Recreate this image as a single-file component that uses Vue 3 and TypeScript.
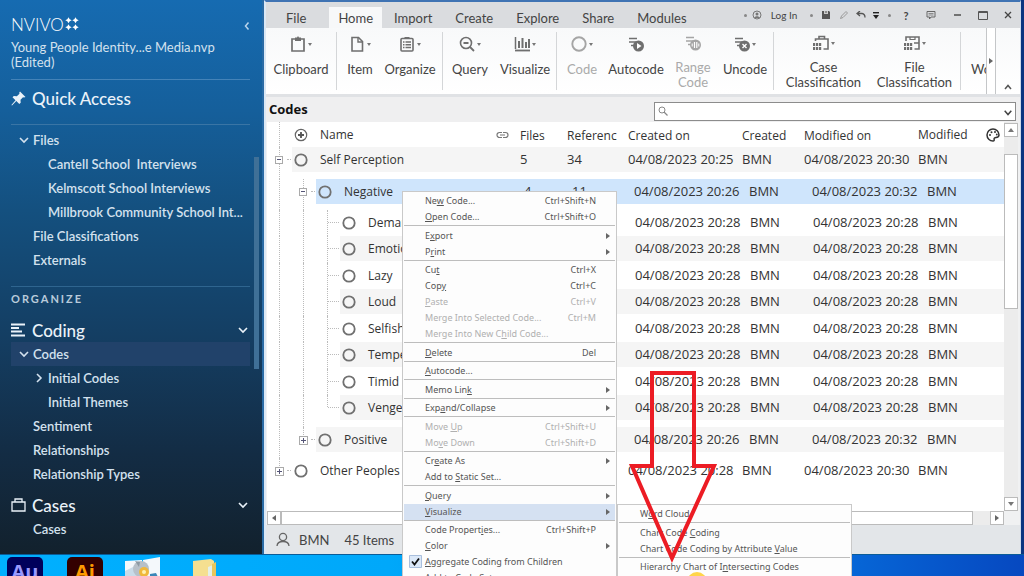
<script setup lang="ts">
import { ref } from 'vue'

interface NavRow { label: string; level: number; arrow?: 'down' | 'right'; active?: boolean }
interface Tool { label: string; icon: string; width: number; caret?: boolean; disabled?: boolean }
interface CodeRow {
  name: string; level: number; box?: '+' | '-'; files?: string; refs?: string
  created: string; modified: string; selected?: boolean; band?: boolean; last?: boolean
}
interface MenuItem { label: string; keys?: string; sub?: boolean; disabled?: boolean; active?: boolean; checked?: boolean }

const fileRows: NavRow[] = [
  { label: 'Files', level: 0, arrow: 'down' },
  { label: 'Cantell School \u00a0Interviews', level: 1 },
  { label: 'Kelmscott School Interviews', level: 1 },
  { label: 'Millbrook Community School Int...', level: 1 },
  { label: 'File Classifications', level: 0 },
  { label: 'Externals', level: 0 },
]
const codingRows: NavRow[] = [
  { label: 'Codes', level: 0, arrow: 'down', active: true },
  { label: 'Initial Codes', level: 1, arrow: 'right' },
  { label: 'Initial Themes', level: 1 },
  { label: 'Sentiment', level: 0 },
  { label: 'Relationships', level: 0 },
  { label: 'Relationship Types', level: 0 },
]
const caseRows: NavRow[] = [{ label: 'Cases', level: 0 }]

const tabs = ['File', 'Home', 'Import', 'Create', 'Explore', 'Share', 'Modules']
const activeTab = ref('Home')

const lines = '<path d="M1 2.5h8M1 6h7M3 9.500h4" stroke="currentColor" stroke-width="1.600" fill="none"/>'
const icons: Record<string, string> = {
  clipboard: '<path d="M2 3h12v12H2z" fill="none" stroke="currentColor" stroke-width="1.7"/><path d="M5 1.500h2L8 0l1 1.500h2V5H5z" fill="currentColor"/>',
  item: '<path d="M3 1.500h6.500L13.500 5.500V15H3z" fill="none" stroke="currentColor" stroke-width="1.600"/><path d="M9 1v5h5" fill="none" stroke="currentColor" stroke-width="1.400"/>',
  organize: '<rect x="2" y="2.500" width="12" height="12.500" rx="1" fill="none" stroke="currentColor" stroke-width="1.600"/><path d="M5.500 1h5v2h-5z" fill="currentColor"/><path d="M4 6h1.500M6.500 6H12M4 8.700h1.500M6.500 8.700H12M4 11.500h1.500M6.500 11.500H12" stroke="currentColor" stroke-width="1.500"/>',
  query: '<circle cx="7" cy="7" r="5.500" fill="none" stroke="currentColor" stroke-width="1.600"/><path d="M11 11l4 4M4.500 7h5" stroke="currentColor" stroke-width="1.800"/>',
  visualize: '<path d="M1.500 1v12" stroke="currentColor" stroke-width="1.500"/><path d="M5 12V5M8.500 12V2M12 12V6M15 12V3" stroke="currentColor" stroke-width="2"/><path d="M1 14.500h15" stroke="currentColor" stroke-width="1.800"/>',
  code: '<circle cx="8" cy="8" r="6.700" fill="none" stroke="currentColor" stroke-width="1.900"/>',
  autocode: lines + '<circle cx="10.500" cy="10" r="5.500" fill="currentColor"/><path d="M9 7l4.500 3L9 13z" fill="#fff"/>',
  range: lines + '<circle cx="10.500" cy="10" r="5.500" fill="currentColor"/><path d="M9.500 7v6M11.800 7v6" stroke="#fff" stroke-width="1.200"/><path d="M7.200 8.500v3M13.800 8.500v3" stroke="#fff"/>',
  uncode: lines + '<circle cx="10.500" cy="10" r="5.500" fill="currentColor"/><path d="M8.500 8l4 4M12.500 8l-4 4" stroke="#fff" stroke-width="1.400"/>',
  caseclass: '<path d="M2.500 6V4H15v10h-4.500" fill="none" stroke="currentColor" stroke-width="1.600"/><path d="M6 4V1.500h5.500V4" fill="none" stroke="currentColor" stroke-width="1.600"/><path d="M0 8h2.200v3H0zM3 8h2.200v3H3zM6 8h2.200v3H6zM0 12h2.200v3H0zM3 12h2.200v3H3zM6 12h2.200v3H6z" fill="currentColor"/>',
  fileclass: '<path d="M2 6V2h13v12h-4.500M10 8h5" fill="none" stroke="currentColor" stroke-width="1.600"/><path d="M6 2v2.500h5V2" fill="none" stroke="currentColor" stroke-width="1.200"/><path d="M0 8h2.200v3H0zM3 8h2.200v3H3zM6 8h2.200v3H6zM0 12h2.200v3H0zM3 12h2.200v3H3zM6 12h2.200v3H6z" fill="currentColor"/>',
}
const groups: { cls: string; tools: Tool[] }[] = [
  { cls: '', tools: [{ label: 'Clipboard', icon: 'clipboard', width: 70, caret: true }] },
  { cls: 'g-item', tools: [
    { label: 'Item', icon: 'item', width: 46, caret: true },
    { label: 'Organize', icon: 'organize', width: 54, caret: true },
  ] },
  { cls: 'g-query', tools: [
    { label: 'Query', icon: 'query', width: 54, caret: true },
    { label: 'Visualize', icon: 'visualize', width: 56, caret: true },
  ] },
  { cls: 'g-code', tools: [
    { label: 'Code', icon: 'code', width: 50, caret: true, disabled: true },
    { label: 'Autocode', icon: 'autocode', width: 58 },
    { label: 'Range Code', icon: 'range', width: 56, disabled: true },
    { label: 'Uncode', icon: 'uncode', width: 48, caret: true },
  ] },
  { cls: 'g-class', tools: [
    { label: 'Case Classification', icon: 'caseclass', width: 91, caret: true },
    { label: 'File Classification', icon: 'fileclass', width: 91, caret: true },
  ] },
]

const d28 = '04/08/2023 20:28'
const kids = ['Demanding', 'Emotional', 'Lazy', 'Loud', 'Selfish', 'Temperamental', 'Timid', 'Vengeful']
const rows: CodeRow[] = [
  { name: 'Self Perception', level: 0, box: '-', files: '5', refs: '34', created: '04/08/2023 20:25', modified: '04/08/2023 20:30', band: true },
  { name: 'Negative', level: 1, box: '-', files: '4', refs: '11', created: '04/08/2023 20:26', modified: '04/08/2023 20:32', selected: true },
  ...kids.map((name, i): CodeRow => ({ name, level: 2, created: d28, modified: d28, band: i % 2 === 1, last: i === kids.length - 1 })),
  { name: 'Positive', level: 1, box: '+', created: '04/08/2023 20:26', modified: '04/08/2023 20:32', band: true, last: true },
  { name: 'Other Peoples', level: 0, box: '+', created: d28, modified: '04/08/2023 20:30', last: true },
]

const menu: MenuItem[][] = [
  [{ label: 'Ne&w Code...', keys: 'Ctrl+Shift+N' }, { label: '&Open Code...', keys: 'Ctrl+Shift+O' }],
  [{ label: 'E&xport', sub: true }, { label: 'P&rint', sub: true }],
  [
    { label: 'Cu&t', keys: 'Ctrl+X' }, { label: 'Cop&y', keys: 'Ctrl+C' },
    { label: '&Paste', keys: 'Ctrl+V', disabled: true },
    { label: 'Merge Into Selected Code...', keys: 'Ctrl+M', disabled: true },
    { label: 'Merge Into New C&hild Code...', disabled: true },
  ],
  [{ label: '&Delete', keys: 'Del' }],
  [{ label: '&Autocode...' }],
  [{ label: 'Memo Lin&k', sub: true }],
  [{ label: 'Exp&and/Collapse', sub: true }],
  [{ label: 'Move &Up', keys: 'Ctrl+Shift+U', disabled: true }, { label: 'Mo&ve Down', keys: 'Ctrl+Shift+D', disabled: true }],
  [{ label: 'Cr&eate As', sub: true }, { label: 'Add to &Static Set...' }],
  [{ label: '&Query', sub: true }, { label: '&Visualize', sub: true, active: true }],
  [
    { label: 'Code Propert&ies...', keys: 'Ctrl+Shift+P' }, { label: '&Color', sub: true },
    { label: '&Aggregate Coding from Children', checked: true }, { label: 'Add to Code &Set...' },
  ],
]
const submenu: MenuItem[][] = [
  [{ label: 'W&ord Cloud' }],
  [{ label: 'Chart Code &Coding' }, { label: 'Chart Code Coding by Attribute &Value' }],
  [{ label: 'Hierarchy Chart of I&ntersecting Codes' }],
]
function parts(label: string): [string, string, string] {
  const i = label.indexOf('&')
  return i < 0 ? [label, '', ''] : [label.slice(0, i), label[i + 1], label.slice(i + 2)]
}
</script>

<template>
  <div class="desktop">
    <div class="window">
      <aside class="side">
        <div class="logo">
          <span>NVIVO</span>
          <svg width="14" height="14" viewBox="0 0 14 14"><path v-for="p in ['M3.500 .3', 'M10.500 .3', 'M3.500 7.300', 'M10.500 7.300']" :key="p" :d="p + 'l1.200 2 2 1-2 1-1.200 2-1.200-2-2-1 2-1z'" fill="#fff" /></svg>
          <button class="collapse" aria-label="Collapse"><svg width="6" height="10" viewBox="0 0 6 10"><path d="M4.500 1.500L1.500 5l3 3.500" fill="none" stroke="currentColor" stroke-width="1.500" /></svg></button>
        </div>
        <p class="project">Young People Identity...e Media.nvp<br>(Edited)</p>
        <h2 class="quick">
          <svg width="15" height="15" viewBox="0 0 15 15"><path d="M9 .5l5.500 5.500-1.500.6-1-.3-2.500 2.500.2 3-1.400 1.200-3-3L1 14.500l-.6-.5L4.500 9.200l-3-3 1.300-1.200 3 .2L8.500 2.700l-.3-1z" fill="currentColor" /></svg>
          Quick Access
        </h2>
        <nav class="block files">
          <a v-for="r in fileRows" :key="r.label" href="#" :class="['nav', 'n' + r.level]">
            <svg v-if="r.arrow" class="arrow" width="10" height="10" viewBox="0 0 10 10"><path d="M1 3l4 4 4-4" /></svg>{{ r.label }}
          </a>
        </nav>
        <div class="organize">ORGANIZE</div>
        <h2 class="section">
          <svg width="15" height="14" viewBox="0 0 15 14"><path d="M0 1.500h14M0 5h8M0 8.500h11M0 12.500h14" stroke="currentColor" stroke-width="2" /></svg>
          Coding
          <svg class="chev" width="10" height="10" viewBox="0 0 10 10"><path d="M1 3l4 4 4-4" /></svg>
        </h2>
        <nav class="block">
          <a v-for="r in codingRows" :key="r.label" href="#" :class="['nav', 'n' + r.level, { active: r.active }]">
            <svg v-if="r.arrow" class="arrow" width="10" height="10" viewBox="0 0 10 10"><path :d="r.arrow === 'down' ? 'M1 3l4 4 4-4' : 'M3 1l4 4-4 4'" /></svg>{{ r.label }}
          </a>
        </nav>
        <h2 class="section">
          <svg width="15" height="14" viewBox="0 0 15 14"><path d="M1 4h13v9H1zM4 4V1h7v3" fill="none" stroke="currentColor" stroke-width="1.300" /></svg>
          Cases
          <svg class="chev" width="10" height="10" viewBox="0 0 10 10"><path d="M1 3l4 4 4-4" /></svg>
        </h2>
        <nav class="block">
          <a v-for="r in caseRows" :key="r.label" href="#" :class="['nav', 'n' + r.level]">{{ r.label }}</a>
        </nav>
        <div class="sidescroll"></div>
      </aside>

      <main class="main">
        <header class="titlebar">
          <nav class="tabs">
            <button v-for="t in tabs" :key="t" :class="['tab', { on: t === activeTab, first: t === 'File' }]" @click="activeTab = t">{{ t }}</button>
          </nav>
          <div class="tools">
            <span class="t10 dot"></span>
            <span class="t14"><svg width="10" height="10" viewBox="0 0 10 10"><circle cx="5" cy="5" r="4" fill="none" stroke="#777" /><circle cx="5" cy="4" r="1.500" fill="#777" /><path d="M2 8c1-2.500 5-2.500 6 0" fill="#777" /></svg></span>
            <button class="login">Log In</button>
            <span class="t14 dot"></span>
            <button class="t16" aria-label="Save"><svg width="8" height="8" viewBox="0 0 8 8"><path d="M0 0h7l1 1v7H0z" fill="#555" /><path d="M2 0h4v3H2z" fill="#ccc" /><path d="M3.500 0h1v2h-1z" fill="#555" /></svg></button>
            <button class="t20" aria-label="Edit"><svg width="8" height="8" viewBox="0 0 8 8"><path d="M.5 7.500l1-2.500L6 .5l1.500 1.500L3 6.500z" fill="none" stroke="#999" /></svg></button>
            <button class="t14" aria-label="Undo"><svg width="10" height="8" viewBox="0 0 10 8"><path d="M1 2.500h5q3 .5 3 4M4 0L1 2.500l3 2.500" fill="none" stroke="#555" stroke-width="1.300" /></svg></button>
            <button class="t16" aria-label="More"><svg width="6" height="7" viewBox="0 0 6 7"><path d="M0 .7h6" stroke="#222" stroke-width="1.400" /><path d="M0 3h6L3 7z" fill="#222" /></svg></button>
            <span class="t10 dot"></span>
            <button class="t24 help">?</button>
            <button class="t26" aria-label="Comments"><svg width="10" height="10" viewBox="0 0 10 10"><path d="M1 1.500h8v5.500H5L3.500 9V7H1z" fill="none" stroke="#666" /><path d="M2.500 3.500h5M2.500 5h5" stroke="#777" stroke-width=".8" /></svg></button>
            <button class="t26" aria-label="Minimize"><svg width="7" height="8" viewBox="0 0 7 8"><path d="M0 4h7" stroke="#444" stroke-width="1.400" /></svg></button>
            <button class="t26" aria-label="Maximize"><svg width="10" height="9" viewBox="0 0 10 9"><path d="M.5.5h9v8h-9zM.5 1.500h9" fill="none" stroke="#555" /></svg></button>
            <button class="t24" aria-label="Close"><svg width="8" height="8" viewBox="0 0 8 8"><path d="M1 1l6 6M7 1L1 7" stroke="#444" stroke-width="1.300" /></svg></button>
          </div>
        </header>

        <div class="ribbon">
          <div v-for="(g, i) in groups" :key="i" :class="['group', g.cls]">
            <button v-for="t in g.tools" :key="t.label" class="tool" :disabled="t.disabled" :style="{ width: t.width + 'px' }">
              <span class="ico"><svg width="16" height="16" viewBox="0 0 16 16" v-html="icons[t.icon]"></svg><i v-if="t.caret" class="caret"></i></span>
              <span>{{ t.label }}</span>
            </button>
          </div>
          <div class="more">Wo</div>
          <button class="next" aria-label="Scroll ribbon"><i class="tri right"></i></button>
          <button class="fold" aria-label="Collapse ribbon"><svg width="8" height="6" viewBox="0 0 8 6"><path d="M1 5l3-3.500L7 5" fill="none" stroke="#555" stroke-width="1.500" /></svg></button>
        </div>

        <div class="panelhead">
          <h1>Codes</h1>
          <div class="search">
            <svg width="10" height="10" viewBox="0 0 10 10"><circle cx="4" cy="4" r="3" fill="none" stroke="#888" /><path d="M6 6l3.500 3.500" stroke="#888" stroke-width="1.300" /></svg>
            <input type="text" aria-label="Search codes">
            <button aria-label="Search options"><svg width="8" height="6" viewBox="0 0 8 6"><path d="M.7.8L4 4.500 7.300.8" fill="none" stroke="#444" stroke-width="1.500" /></svg></button>
          </div>
        </div>

        <div class="list">
          <table>
            <thead>
              <tr class="row l0 head">
                <th class="gut"><span class="rail r-end"></span></th>
                <th class="name"><svg width="14" height="14" viewBox="0 0 14 14"><circle cx="7" cy="7" r="5.700" fill="none" stroke="#666" stroke-width="1.200" /><path d="M7 4v6M4 7h6" stroke="#555" stroke-width="1.800" /><circle cx="7" cy="7" r="1.600" fill="#555" /></svg>Name
                  <svg class="link" width="13" height="8" viewBox="0 0 13 8"><path d="M6 1.500H3.500a2.500 2.500 0 0 0 0 5H6M7 1.500h2.500a2.500 2.500 0 0 1 0 5H7M4 4h5" fill="none" stroke="#777" stroke-width="1.200" /></svg>
                </th>
                <th>Files</th><th>Referenc</th><th>Created on</th><th>Created</th><th>Modified on</th>
                <th class="lastcol">Modified
                  <svg width="14" height="14" viewBox="0 0 14 14"><path d="M7 1a6 6 0 1 0 0 12c2 0 .8-1.700 1.200-2.700C8.800 9 13 10.500 13 7a6 6 0 0 0-6-6z" fill="none" stroke="#333" stroke-width="1.500" /><g fill="#333"><circle cx="4" cy="7" r="1" /><circle cx="5.500" cy="4.200" r="1" /><circle cx="9" cy="4" r="1" /><circle cx="10.800" cy="6.500" r=".9" /></g></svg>
                </th>
              </tr>
            </thead>
            <tbody>
              <tr v-for="r in rows" :key="r.name" :class="['row', 'l' + r.level, { band: r.band, sel: r.selected, last: r.last }]">
                <td class="gut">
                  <span v-for="n in r.level" :key="n" class="rail"></span>
                  <span class="rail r-end dash"><i v-if="r.box" :class="['box', { plus: r.box === '+' }]"></i></span>
                </td>
                <td class="name"><svg width="14" height="14" viewBox="0 0 14 14"><circle cx="7" cy="7" r="5.700" fill="none" stroke="#707070" stroke-width="1.800" /></svg>{{ r.name }}</td>
                <td>{{ r.files }}</td><td>{{ r.refs }}</td><td>{{ r.created }}</td><td>BMN</td><td>{{ r.modified }}</td><td>BMN</td>
              </tr>
            </tbody>
          </table>
          <div class="vbar">
            <button aria-label="Scroll up"><i class="tri up"></i></button>
            <div class="vthumb"></div>
            <button aria-label="Scroll down"><i class="tri down"></i></button>
          </div>
        </div>
        <div class="hbar">
          <button aria-label="Scroll left"><i class="tri left"></i></button>
          <div class="hthumb"></div>
          <button aria-label="Scroll right"><i class="tri right"></i></button>
        </div>

        <footer class="status">
          <svg width="14" height="15" viewBox="0 0 14 15"><circle cx="7" cy="5" r="3.600" fill="none" stroke="#666" stroke-width="1.300" /><path d="M1 14c.4-6 11.600-6 12 0" fill="none" stroke="#666" stroke-width="1.300" /></svg>
          <span>BMN</span><span>45 Items</span>
        </footer>
      </main>
    </div>

    <div class="taskbar">
      <div class="app au">Au</div>
      <div class="app ai">Ai</div>
      <svg class="pics" width="36" height="22" viewBox="0 0 36 22"><path d="M0 4l17-1v19H0zM18 3l17-3v22H18z" fill="#f4f8fb" /><path d="M0 14l10-5 7 8v5H0z" fill="#c9dbe8" /><circle cx="16" cy="12" r="8" fill="#b7c0c8" /><path d="M10 4l5 1-1 5z" fill="#8d99a3" /><circle cx="19" cy="15" r="5" fill="#f0b83c" /><circle cx="19" cy="15" r="2" fill="#fff0b0" /><path d="M25 17l6-1 3 6h-9z" fill="#3a87b8" /></svg>
      <svg class="folder" width="26" height="20" viewBox="0 0 26 20"><path d="M1 2l18-2 3 2v18H1z" fill="#f5df90" /><path d="M16 8l5-2v14h-5z" fill="#e4efe9" /><path d="M20 5l4-2v17h-4z" fill="#e8c65c" /></svg>
    </div>

    <div class="menu context" role="menu">
      <div v-for="(g, i) in menu" :key="i" class="mgroup">
        <button v-for="m in g" :key="m.label" role="menuitem" :disabled="m.disabled" :class="['mitem', { active: m.active }]">
          <span class="tick"><svg v-if="m.checked" width="13" height="13" viewBox="0 0 13 13"><path d="M.5.5h12v12H.5z" fill="#dbe8f8" stroke="#a9bfdd" /><path d="M3 6.500l2.500 3 4.500-6" fill="none" stroke="#111" stroke-width="1.800" /></svg></span>
          <span class="mlabel">{{ parts(m.label)[0] }}<u>{{ parts(m.label)[1] }}</u>{{ parts(m.label)[2] }}</span>
          <span v-if="m.keys" class="keys">{{ m.keys }}</span>
          <i v-if="m.sub" class="tri right"></i>
        </button>
      </div>
    </div>
    <div class="menu submenu" role="menu">
      <div v-for="(g, i) in submenu" :key="i" class="mgroup">
        <button v-for="m in g" :key="m.label" role="menuitem" class="mitem">
          <span class="tick"></span>
          <span class="mlabel">{{ parts(m.label)[0] }}<u>{{ parts(m.label)[1] }}</u>{{ parts(m.label)[2] }}</span>
        </button>
      </div>
    </div>
    <svg class="pointer" width="90" height="206" viewBox="0 0 90 206">
      <circle cx="69" cy="212" r="10" fill="#ffd54a" />
      <path d="M24 3h42v93h20L44 188 4 96h20z" fill="none" stroke="#ec1c24" stroke-width="4" />
    </svg>
  </div>
</template>

<style>
body { margin: 0; }
</style>

<style scoped>
* { box-sizing: border-box; }
button { font: inherit; color: inherit; background: none; border: 0; padding: 0; margin: 0; }
h1, h2, p { margin: 0; }
.desktop {
  position: relative; display: flex; flex-direction: column; height: 100vh; overflow: hidden;
  background: linear-gradient(90deg, #00b0ff 0%, #00a8fa 38%, #0668d8 82%, #0648c0 100%);
  font-family: Lato, "Liberation Sans", sans-serif; font-size: 13px; color: #444;
}
.window { flex: 1; min-height: 0; display: grid; grid-template-columns: 264px 1fr; padding-right: 3px; background: #0a3480; }

.side {
  position: relative; padding: 8px 12px 0 11px; color: #d3e1ee; border-right: 2px solid #2a6ba5;
  background: linear-gradient(#166bb1 0%, #155f9b 20%, #14507f 38%, #143d61 62%, #132c44 82%, #12212d 100%);
}
.logo { height: 32px; display: flex; align-items: center; gap: 1px; font-size: 17px; font-weight: 300; color: #fff; }
.collapse { margin-left: auto; color: #b9d4ec; }
.project { line-height: 15px; padding-bottom: 9px; border-bottom: 1px solid #4483b8; }
.quick, .section { display: flex; align-items: center; gap: 6px; font-size: 17px; font-weight: 500; color: #eaf2f9; }
.quick { height: 45px; padding-bottom: 7px; border-bottom: 1px solid #3a75a5; }
.block { display: flex; flex-direction: column; font-weight: 600; }
.files { padding: 3px 0 14px; border-bottom: 1px solid #2f658f; }
.nav { display: flex; align-items: center; gap: 4px; height: 24px; color: inherit; text-decoration: none; white-space: nowrap; }
.n0 { padding-left: 22px; }
.n1 { padding-left: 37px; }
.arrow { margin-left: -14px; }
.arrow, .chev { fill: none; stroke: currentColor; stroke-width: 1.600; }
.active { background: #21426a; }
.organize { height: 24px; line-height: 24px; font-size: 11px; font-weight: 700; letter-spacing: 2px; color: #b9cbdb; }
.section { height: 24px; margin-top: 7px; }
.chev { margin: 0 2px 0 auto; }
.sidescroll { position: absolute; right: 3px; top: 157px; width: 5px; height: 212px; background: #3f7097; }

.main { min-width: 0; display: flex; flex-direction: column; border-top: 2px solid #3f73b3; border-left: 2px solid #dbe8f5; border-right: 1px solid #cdd9ea; background: #f0f1f2; }
.titlebar { display: flex; justify-content: space-between; height: 26px; background: #dadcdf; }
.tabs { display: flex; align-items: flex-end; gap: 1px; }
.tab { height: 21px; padding: 0 11px; line-height: 20px; color: #444; }
.tab.first { padding: 0 22px 0 20px; }
.tab.on { padding: 0 9px; background: #f7f8f9; }
.tools { display: flex; align-items: center; font-size: 10px; }
.tools > * { display: flex; align-items: center; justify-content: center; height: 26px; }
.t10 { width: 10px; } .t14 { width: 14px; } .t16 { width: 16px; } .t20 { width: 20px; } .t24 { width: 24px; } .t26 { width: 26px; }
.login { width: 40px; }
.help { font-size: 11px; font-weight: 700; }
.dot::before { content: ""; width: 3px; height: 3px; border-radius: 50%; background: #888; }

.ribbon { display: flex; height: 66px; background: linear-gradient(#f8f9fa, #fff); overflow: hidden; }
.group { display: flex; margin: 4px 0; border-right: 1px solid #d4d6d8; }
.g-item { padding-right: 5px; }
.g-query { padding-right: 3px; }
.g-code { padding-right: 4px; }
.g-class { padding-left: 4px; }
.tool { display: flex; flex-direction: column; align-items: center; justify-content: flex-start; line-height: 15px; color: #444; }
.tool:disabled { color: #aaa; }
.ico { display: flex; align-items: center; gap: 2px; height: 24px; margin-bottom: 6px; color: #6f6f6f; }
.tool:disabled .ico { color: #a5a5a5; }
.caret { border: 2px solid transparent; border-top: 3px solid #777; border-bottom: 0; }
.more { flex: 1; min-width: 0; padding: 34px 0 0 10px; line-height: 15px; overflow: hidden; }
.next { width: 10px; border: 1px solid #c4c6c8; border-top: 0; border-bottom: 0; background: #fff; display: flex; align-items: center; justify-content: center; }
.fold { width: 24px; padding: 52px 0 0; line-height: 0; }

.panelhead { display: flex; align-items: center; height: 28px; padding: 3px 4px 0 3px; border-top: 3px solid #e0e2e5; background: #efeff0; }
h1 { flex: 0 0 385px; padding-bottom: 4px; font: 700 13px "Open Sans", sans-serif; color: #111; }
.search { flex: 1; display: flex; align-items: center; height: 19px; padding: 0 3px; border: 1px solid #8c8c8c; background: #fff; }
.search input { flex: 1; min-width: 0; border: 0; outline: 0; }

.list { flex: 1; min-height: 0; display: flex; margin: 0 2px 0 1px; background: #fff; font: 13px "Open Sans", "Noto Sans", sans-serif; color: #333; }
table { flex: 1; min-width: 0; display: block; overflow: hidden; }
thead, tbody { display: block; }
.row { display: grid; height: 32px; }
.l0 { grid-template-columns: 25px 1fr 47px 61px 114px 62px 114px 86px; }
.l1 { grid-template-columns: 49px 1fr 48px 62px 115px 63px 115px 77px; height: 31px; }
.l2 { grid-template-columns: 73px 1fr 48px 62px 115px 63px 115px 76px; height: 27px; }
.l2:nth-child(odd) { height: 26px; }
.l2.last { height: 32px; }
.head { height: 25px; }
td, th { padding: 0; height: 25px; line-height: 24px; font-weight: 400; text-align: left; white-space: nowrap; }
th { line-height: 27px; }
.head { font-size: 12px; }
.band td { background: #f5f5f5; }
.sel td { background: #cfe5fc; }
td.gut, .gut { display: flex; height: 100%; padding-left: 12px; background: #fff; }
.name { display: flex; align-items: center; gap: 12px; padding-left: 2px; overflow: hidden; font-size: 12px; }
.link { margin-left: auto; margin-right: 11px; }
.lastcol { display: flex; align-items: center; gap: 18px; }
.rail { flex: 0 0 24px; border-left: 1px dotted #bbb; }
.r-end { flex-basis: 13px; position: relative; }
.last .r-end { height: 12px; }
.dash::after { content: ""; position: absolute; left: 7px; right: 1px; top: 12px; border-top: 1px dotted #bbb; }
.l2 .dash::after { left: 0; }
.box { position: absolute; left: -5px; top: 9px; width: 8px; height: 8px; border: 1px solid #aaa; background: #fff; }
.box::before { content: ""; position: absolute; left: 1px; top: 2px; width: 4px; height: 1px; background: #557; }
.plus::before { left: 1px; width: 5px; top: 3px; }
.plus { width: 9px; height: 9px; }
.plus::after { content: ""; position: absolute; left: 3px; top: 1px; width: 1px; height: 5px; background: #557; }

.tri { width: 0; height: 0; border: 3px solid transparent; }
.tri.right { border-left: 4px solid #666; border-right: 0; }
.tri.left { border-right: 4px solid #666; border-left: 0; }
.tri.up { border-bottom: 4px solid #777; border-top: 0; }
.tri.down { border-top: 4px solid #777; border-bottom: 0; }
.vbar { width: 14px; display: flex; flex-direction: column; padding-top: 1px; background: #ececec; }
.vbar button, .hbar button { flex: 0 0 14px; display: flex; align-items: center; justify-content: center; border: 1px solid #bbb; background: #fff; }
.vbar button:last-child { margin-top: auto; }
.vthumb { height: 40%; margin-top: 17px; border: 1px solid #bbb; background: #fff; }
.hbar { display: flex; height: 14px; margin: 0 16px 0 1px; background: #ececec; }
.hthumb { flex: 1; margin-right: 17px; border: 1px solid #bbb; background: #fff; }
.status { display: flex; align-items: center; gap: 15px; height: 29px; padding-left: 10px; background: #e3e6e9; font-size: 13px; }
.status svg { margin-right: -6px; }

.taskbar { display: flex; align-items: flex-start; height: 22px; padding: 2px 0 0 7px; border-top: 1px solid #0a5c98; overflow: hidden; }
.app { width: 36px; height: 36px; border-radius: 5px; font: 700 20px/30px "Open Sans", sans-serif; text-align: center; }
.au { background: #00005b; color: #9999ff; }
.ai { margin-left: 24px; background: #330000; color: #ff9a00; }
.pics { margin-left: 22px; }
.folder { margin: 2px 0 0 31px; }

.menu { position: absolute; padding: 1px; border: 1px solid #c9c9c9; border-bottom: 0; background: #fdfdfd; font: 9px "Noto Sans", "Open Sans", sans-serif; color: #555; }
.context { left: 402px; top: 191px; width: 215px; }
.submenu { left: 617px; top: 504px; width: 235px; }
.mgroup + .mgroup { border-top: 1px solid #bdbdbd; padding-top: 1px; }
.mgroup:nth-child(even) { padding-top: 2px; }
.mitem { display: flex; align-items: center; width: 100%; height: 16px; padding-right: 5px; line-height: 16px; white-space: nowrap; }
.mitem:disabled { color: #b0b0b0; }
.mitem.active { background: #d5e1f2; }
.tick { flex: 0 0 21px; height: 14px; padding-left: 1px; line-height: 0; }
.mlabel { flex: 1; text-align: left; }
.keys { padding-right: 14px; }
.pointer { position: absolute; left: 628px; top: 370px; }
</style>
